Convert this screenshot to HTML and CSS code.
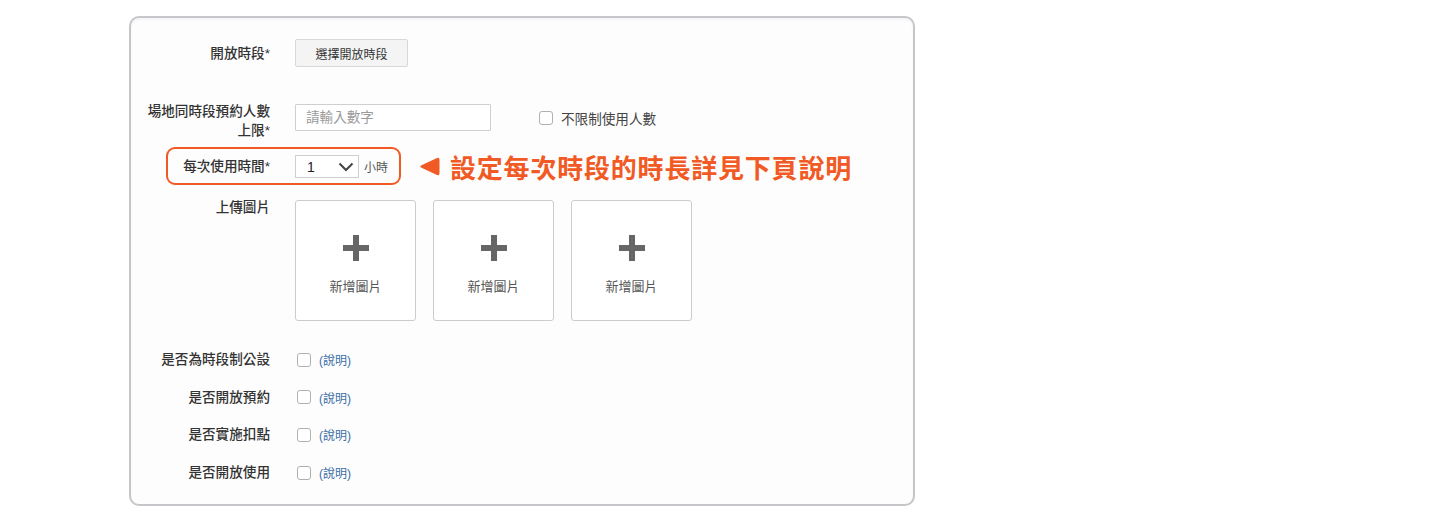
FILE: index.html
```html
<!DOCTYPE html>
<html lang="zh-Hant">
<head>
    <meta charset="UTF-8">
    <title>場地設定</title>
    <link rel="stylesheet" href="styles.css">
</head>
<body>
    <div class="panel">
        <div class="row row-open">
            <div class="label">開放時段*</div>
            <button class="btn">選擇開放時段</button>
        </div>

        <div class="row row-limit">
            <div class="label label-wrap">場地同時段預約人數上限*</div>
            <input class="text-input" type="text" placeholder="請輸入數字">
            <label class="check-label"><span class="check"></span>不限制使用人數</label>
        </div>

        <div class="row row-hours">
            <div class="highlight">
                <div class="label label-short">每次使用時間*</div>
                <div class="select">
                    <span>1</span>
                    <svg width="16" height="10" viewBox="0 0 16 10"><path d="M1.5 1.5 L8 8 L14.5 1.5" fill="none" stroke="#444" stroke-width="2"/></svg>
                </div>
                <span class="unit">小時</span>
            </div>
            <div class="note">
                <svg class="note-arrow" width="21" height="21" viewBox="0 0 21 21"><path d="M18 2 Q20.5 1 20.5 4 L20.5 17 Q20.5 20 18 19 L2 11.6 Q0.5 10.5 2 9.4 Z" fill="#f15a24"/></svg>
                <span>設定每次時段的時長詳見下頁說明</span>
            </div>
        </div>

        <div class="row row-upload">
            <div class="label label-top">上傳圖片</div>
            <div class="uploads">
                <div class="upload">
                    <svg width="26" height="26" viewBox="0 0 26 26"><rect x="10" y="0" width="6" height="26" fill="#666"/><rect x="0" y="10" width="26" height="6" fill="#666"/></svg>
                    <span>新增圖片</span>
                </div>
                <div class="upload">
                    <svg width="26" height="26" viewBox="0 0 26 26"><rect x="10" y="0" width="6" height="26" fill="#666"/><rect x="0" y="10" width="26" height="6" fill="#666"/></svg>
                    <span>新增圖片</span>
                </div>
                <div class="upload">
                    <svg width="26" height="26" viewBox="0 0 26 26"><rect x="10" y="0" width="6" height="26" fill="#666"/><rect x="0" y="10" width="26" height="6" fill="#666"/></svg>
                    <span>新增圖片</span>
                </div>
            </div>
        </div>

        <div class="checks">
            <div class="row row-check">
                <div class="label">是否為時段制公設</div>
                <span class="check"></span>
                <a class="help">(說明)</a>
            </div>
            <div class="row row-check">
                <div class="label">是否開放預約</div>
                <span class="check"></span>
                <a class="help">(說明)</a>
            </div>
            <div class="row row-check">
                <div class="label">是否實施扣點</div>
                <span class="check"></span>
                <a class="help">(說明)</a>
            </div>
            <div class="row row-check">
                <div class="label">是否開放使用</div>
                <span class="check"></span>
                <a class="help">(說明)</a>
            </div>
        </div>
    </div>
</body>
</html>
```

FILE: styles.css
```css
body {
    margin: 0;
    background-color: #ffffff;
    font-family: 'Liberation Sans', 'Noto Sans CJK TC', sans-serif;
    color: #333;
}
.panel {
    box-sizing: border-box;
    width: 786px;
    height: 490px;
    margin: 16px 0 0 129px;
    padding: 21px 0 0 13px;
    border: 2px solid #c6c6ca;
    border-radius: 10px;
    background-color: #fdfdfd;
    box-shadow: inset 0 2px 3px rgba(0, 0, 0, 0.04);
}
.row {
    display: flex;
    align-items: center;
}
.label {
    width: 126px;
    margin-right: 25px;
    text-align: right;
    font-size: 13.6px;
    font-weight: 500;
    color: #333;
    line-height: 19px;
    flex-shrink: 0;
}
.btn {
    width: 113px;
    height: 28px;
    padding: 0;
    font-family: inherit;
    font-size: 12px;
    color: #333;
    background-color: #f4f4f4;
    border: 1px solid #d8d8d8;
    border-radius: 2px;
}
.row-limit {
    margin-top: 37px;
    align-items: flex-start;
}
.label-wrap {
    margin-top: -2px;
}
.text-input {
    box-sizing: border-box;
    width: 196px;
    height: 27px;
    padding: 0 10px;
    font-family: inherit;
    font-size: 13.6px;
    border: 1px solid #cfcfcf;
    border-radius: 1px;
    background: #fff;
}
.text-input::placeholder {
    color: #9a9a9a;
}
.check-label {
    display: flex;
    align-items: center;
    height: 27px;
    margin-left: 48px;
    font-size: 13.6px;
    color: #444;
}
.check {
    box-sizing: border-box;
    display: inline-block;
    width: 14px;
    height: 14px;
    border: 1.5px solid #b0b0b0;
    border-radius: 3px;
    background: #fff;
    margin-right: 8px;
    flex-shrink: 0;
}
.row-hours {
    margin-top: 7px;
}
.highlight {
    display: flex;
    align-items: center;
    margin-left: 22px;
    padding: 6px 11px 5px 0;
    border: 2px solid #f15a24;
    border-radius: 9px;
}
.label-short {
    width: 102px;
}
.select {
    box-sizing: border-box;
    display: flex;
    align-items: center;
    justify-content: space-between;
    width: 64px;
    height: 23px;
    padding: 0 4px 0 11px;
    border: 1px solid #cfcfcf;
    background: #fff;
    font-size: 14px;
    color: #222;
}
.unit {
    margin-left: 5px;
    font-size: 12px;
    color: #555;
}
.note {
    display: flex;
    align-items: center;
    margin-left: 18px;
    color: #f15a24;
    font-family: 'Noto Sans CJK TC', sans-serif;
    font-size: 26px;
    font-weight: 700;
    letter-spacing: 0.8px;
}
.note-arrow {
    margin-right: 10px;
}
.row-upload {
    margin-top: 15px;
    align-items: flex-start;
}
.label-top {
    line-height: 15px;
}
.uploads {
    display: flex;
    gap: 17px;
}
.upload {
    box-sizing: border-box;
    width: 121px;
    height: 121px;
    border: 1px solid #cccccc;
    border-radius: 3px;
    background: #fff;
    display: flex;
    flex-direction: column;
    align-items: center;
    padding-top: 34px;
}
.upload span {
    margin-top: 15px;
    font-size: 13px;
    color: #555;
}
.checks {
    margin-top: 20px;
}
.row-check {
    height: 37.6px;
}
.row-check .check {
    margin-left: 2px;
    margin-right: 8px;
}
.help {
    font-size: 12px;
    color: #3b6ea8;
}
```
